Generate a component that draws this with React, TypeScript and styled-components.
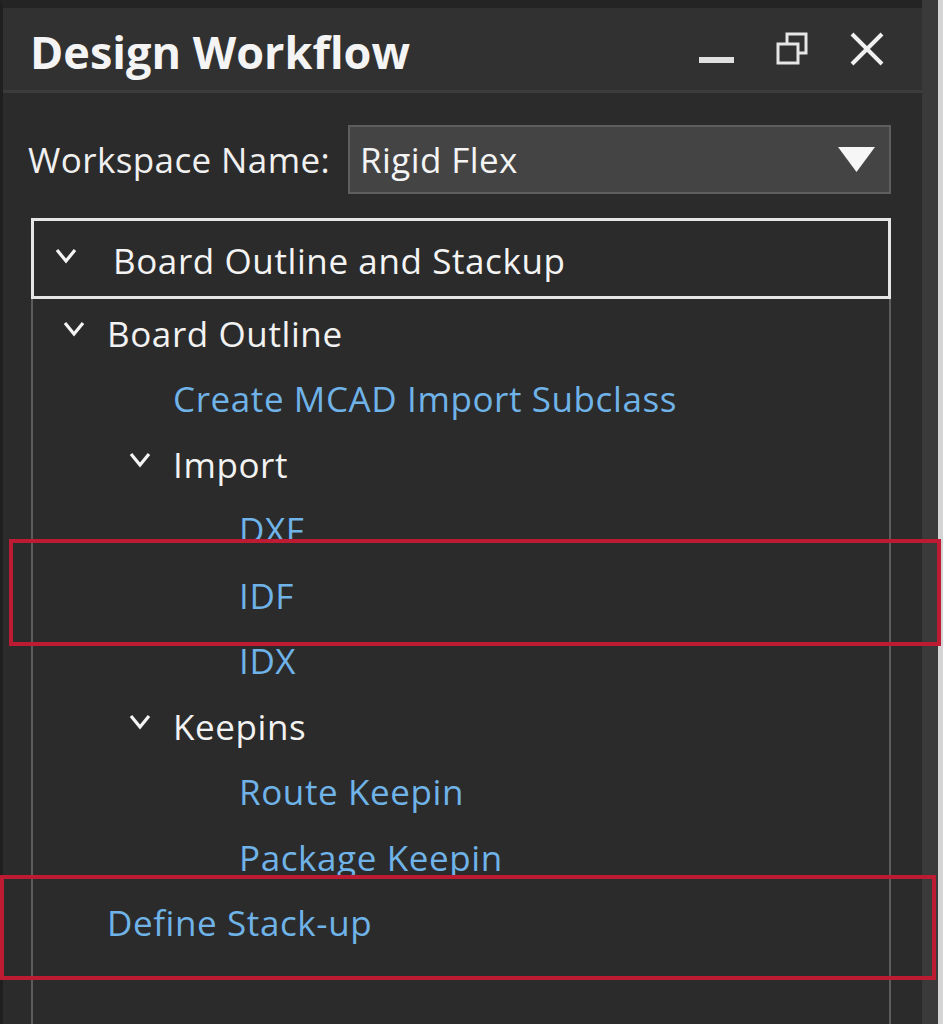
import React from 'react';
import styled, { createGlobalStyle } from 'styled-components';

const GlobalStyle = createGlobalStyle`
    html, body {
        margin: 0;
        padding: 0;
        background: #2b2b2b;
    }
    body {
        font-family: "Open Sans", "Noto Sans", "Liberation Sans", sans-serif;
    }
`;

const Page = styled.div`
    position: relative;
    display: flex;
    width: 943px;
    height: 1024px;
    overflow: hidden;
    background: #2b2b2b;
`;

const Panel = styled.div`
    flex: 1;
    display: flex;
    flex-direction: column;
    border-left: 3px solid #1f1f1f;
    border-top: 8px solid #242424;
    min-width: 0;
`;

const ScrollStrip = styled.div`
    width: 16px;
    background: #3a3a3a;
`;

const Edge = styled.div`
    width: 5px;
    background: #d4d4d4;
`;

const TitleBar = styled.div`
    display: flex;
    align-items: center;
    height: 82px;
    padding: 0 38px 0 27px;
    background: #313131;
    border-bottom: 3px solid #3b3b3b;
`;

const Title = styled.h1`
    flex: 1;
    margin: 4px 0 0;
    font-size: 45px;
    font-weight: 700;
    color: #f4f4f4;
`;

const WindowButtons = styled.div`
    display: flex;
    align-items: center;
    gap: 42px;
`;

const IconButton = styled.button`
    display: flex;
    padding: 0;
    border: 0;
    background: none;
    color: #eeeeee;
`;

const Body = styled.div`
    flex: 1;
    display: flex;
    flex-direction: column;
    padding: 32px 31px 0 25px;
    min-height: 0;
`;

const WorkspaceRow = styled.div`
    display: flex;
    align-items: center;
`;

const Label = styled.label`
    font-size: 35px;
    letter-spacing: 0.4px;
    color: #f0f0f0;
    white-space: nowrap;
`;

const Select = styled.div`
    width: 543px;
    margin-left: auto;
    display: flex;
    align-items: center;
    justify-content: space-between;
    height: 69px;
    box-sizing: border-box;
    padding: 0 14px 0 10px;
    background: #444444;
    border: 2px solid #5e5e5e;
    font-size: 35px;
    letter-spacing: 0.4px;
    color: #f4f4f4;
`;

const Tree = styled.div`
    flex: 1;
    display: flex;
    flex-direction: column;
    margin: 24px 0 0 3px;
    min-height: 0;
`;

const TreeHeader = styled.div`
    display: flex;
    align-items: center;
    height: 81px;
    box-sizing: border-box;
    padding: 3px 0 0 21px;
    border: 3px solid #e6e6e6;
    font-size: 35px;
    letter-spacing: 0.6px;
    color: #f4f4f4;
`;

const TreeBody = styled.div`
    flex: 1;
    border-left: 2px solid #5c5c5c;
    border-right: 2px solid #5c5c5c;
`;

const Row = styled.div<{ $level: number; $link: boolean }>`
    display: flex;
    align-items: center;
    height: 65.5px;
    padding: 3px 0 0 ${({ $level }) => 30 + ($level - 1) * 66}px;
    box-sizing: border-box;
    font-size: 35px;
    letter-spacing: 0.6px;
    color: ${({ $link }) => ($link ? '#6fb3e8' : '#f2f2f2')};
    white-space: nowrap;
`;

const ChevronSlot = styled.span<{ $w: number }>`
    display: flex;
    align-items: center;
    width: ${({ $w }) => $w}px;
    flex-shrink: 0;
    margin-top: -8px;
`;

const Highlight = styled.div`
    position: absolute;
    box-sizing: border-box;
    border: 4px solid #bd1a34;
    pointer-events: none;
`;

const Chevron = () => (
    <svg width="22" height="16" viewBox="0 0 22 16">
        <polyline points="2,2 11,13 20,2" fill="none" stroke="#f4f4f4" strokeWidth="3.2" />
    </svg>
);

type Item = { label: string; level: number; folder?: boolean };

const items: Item[] = [
    { label: 'Board Outline', level: 1, folder: true },
    { label: 'Create MCAD Import Subclass', level: 2 },
    { label: 'Import', level: 2, folder: true },
    { label: 'DXF', level: 3 },
    { label: 'IDF', level: 3 },
    { label: 'IDX', level: 3 },
    { label: 'Keepins', level: 2, folder: true },
    { label: 'Route Keepin', level: 3 },
    { label: 'Package Keepin', level: 3 },
    { label: 'Define Stack-up', level: 1 },
];

export default function App() {
    return (
        <>
            <GlobalStyle />
            <Page>
                <Panel>
                    <TitleBar>
                        <Title>Design Workflow</Title>
                        <WindowButtons>
                            <IconButton aria-label="Minimize">
                                <svg width="35" height="34" viewBox="0 0 35 34">
                                    <rect x="0" y="25" width="35" height="6" fill="#e0e0e0" />
                                </svg>
                            </IconButton>
                            <IconButton aria-label="Restore">
                                <svg width="32" height="34" viewBox="0 0 32 34">
                                    <rect x="11" y="2" width="19" height="19" fill="none" stroke="#e6e6e6" strokeWidth="3" />
                                    <rect x="2" y="12" width="20" height="19" fill="#313131" stroke="#e6e6e6" strokeWidth="3" />
                                </svg>
                            </IconButton>
                            <IconButton aria-label="Close">
                                <svg width="34" height="34" viewBox="0 0 34 34">
                                    <path d="M2 2 L32 32 M32 2 L2 32" stroke="#f0f0f0" strokeWidth="4" />
                                </svg>
                            </IconButton>
                        </WindowButtons>
                    </TitleBar>
                    <Body>
                        <WorkspaceRow>
                            <Label>Workspace Name:</Label>
                            <Select>
                                <span>Rigid Flex</span>
                                <svg width="37" height="25" viewBox="0 0 37 25">
                                    <polygon points="0,0 37,0 18.5,25" fill="#f6f6f6" />
                                </svg>
                            </Select>
                        </WorkspaceRow>
                        <Tree>
                            <TreeHeader>
                                <ChevronSlot $w={58}>
                                    <Chevron />
                                </ChevronSlot>
                                Board Outline and Stackup
                            </TreeHeader>
                            <TreeBody>
                                {items.map((it) => (
                                    <Row key={it.label} $level={it.level} $link={!it.folder}>
                                        <ChevronSlot $w={44}>{it.folder && <Chevron />}</ChevronSlot>
                                        {it.label}
                                    </Row>
                                ))}
                            </TreeBody>
                        </Tree>
                    </Body>
                </Panel>
                <ScrollStrip />
                <Edge />
                <Highlight style={{ left: 9, top: 539, width: 932, height: 107 }} />
                <Highlight style={{ left: 0, top: 875, width: 936, height: 105 }} />
            </Page>
        </>
    );
}
